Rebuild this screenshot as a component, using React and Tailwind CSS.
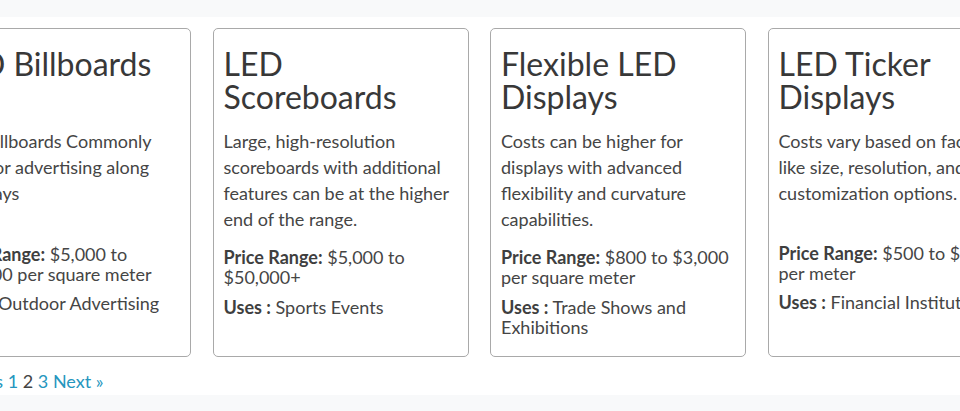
import React from 'react';

const cards = [
  {
    title: 'LED Billboards',
    desc: 'LED Billboards Commonly used for advertising along highways',
    price: '$5,000 to $50,000 per square meter',
    uses: 'Outdoor Advertising',
    descGap: 'mb-[38px]',
    priceGap: 'mb-[9px]',
  },
  {
    title: 'LED Scoreboards',
    desc: 'Large, high-resolution scoreboards with additional features can be at the higher end of the range.',
    price: '$5,000 to $50,000+',
    uses: 'Sports Events',
    descGap: 'mb-[15px]',
    priceGap: 'mb-[10px]',
  },
  {
    title: 'Flexible LED Displays',
    desc: 'Costs can be higher for displays with advanced flexibility and curvature capabilities.',
    price: '$800 to $3,000 per square meter',
    uses: 'Trade Shows and Exhibitions',
    descGap: 'mb-[15px]',
    priceGap: 'mb-[10px]',
  },
  {
    title: 'LED Ticker Displays',
    desc: 'Costs vary based on factors like size, resolution, and customization options.',
    price: '$500 to $2,000 per meter',
    uses: 'Financial Institutions',
    descGap: 'mb-[37px]',
    priceGap: 'mb-[9px]',
  },
];

const Card = ({ item }) => (
  <div className="w-[256px] h-[329px] shrink-0 border border-[#a9a9a9] rounded-[5px] bg-white px-[10px] pt-[18px]">
    <h3 className="min-h-[66px] text-[32px] leading-[33px] text-[#383838] mb-[15px]">{item.title}</h3>
    <p className={`text-[18px] leading-[26px] text-[#454545] ${item.descGap}`}>{item.desc}</p>
    <p className={`text-[18px] leading-[20px] text-[#454545] ${item.priceGap}`}>
      <b className="font-bold text-[#3f3f3f]">Price Range:</b> {item.price}
    </p>
    <p className="text-[18px] leading-[20px] text-[#454545]">
      <b className="font-bold text-[#3f3f3f]">Uses :</b> {item.uses}
    </p>
  </div>
);

export default function App() {
  return (
    <div className="w-[960px] h-[411px] overflow-hidden bg-white flex flex-col" style={{ fontFamily: 'Lato, "Open Sans", sans-serif' }}>
      <div className="h-[17px] bg-[#f8f9fa] shrink-0" />
      <div className="flex-1 ml-[-65px] pt-[11px]">
        <div className="flex gap-[21.5px]">
          {cards.map((c, i) => (
            <Card key={i} item={c} />
          ))}
        </div>
        <div className="mt-[13px] ml-[-12px] text-[18px] leading-[22px] text-[#444] whitespace-pre">
          <a className="text-[#2596be]">« Previous</a>{' '}
          <a className="text-[#2596be]">1</a>{' '}
          <span>2</span>{' '}
          <a className="text-[#2596be]">3</a>{' '}
          <a className="text-[#2596be]">Next »</a>
        </div>
      </div>
      <div className="h-[16px] bg-[#f8f9fa] shrink-0" />
    </div>
  );
}
